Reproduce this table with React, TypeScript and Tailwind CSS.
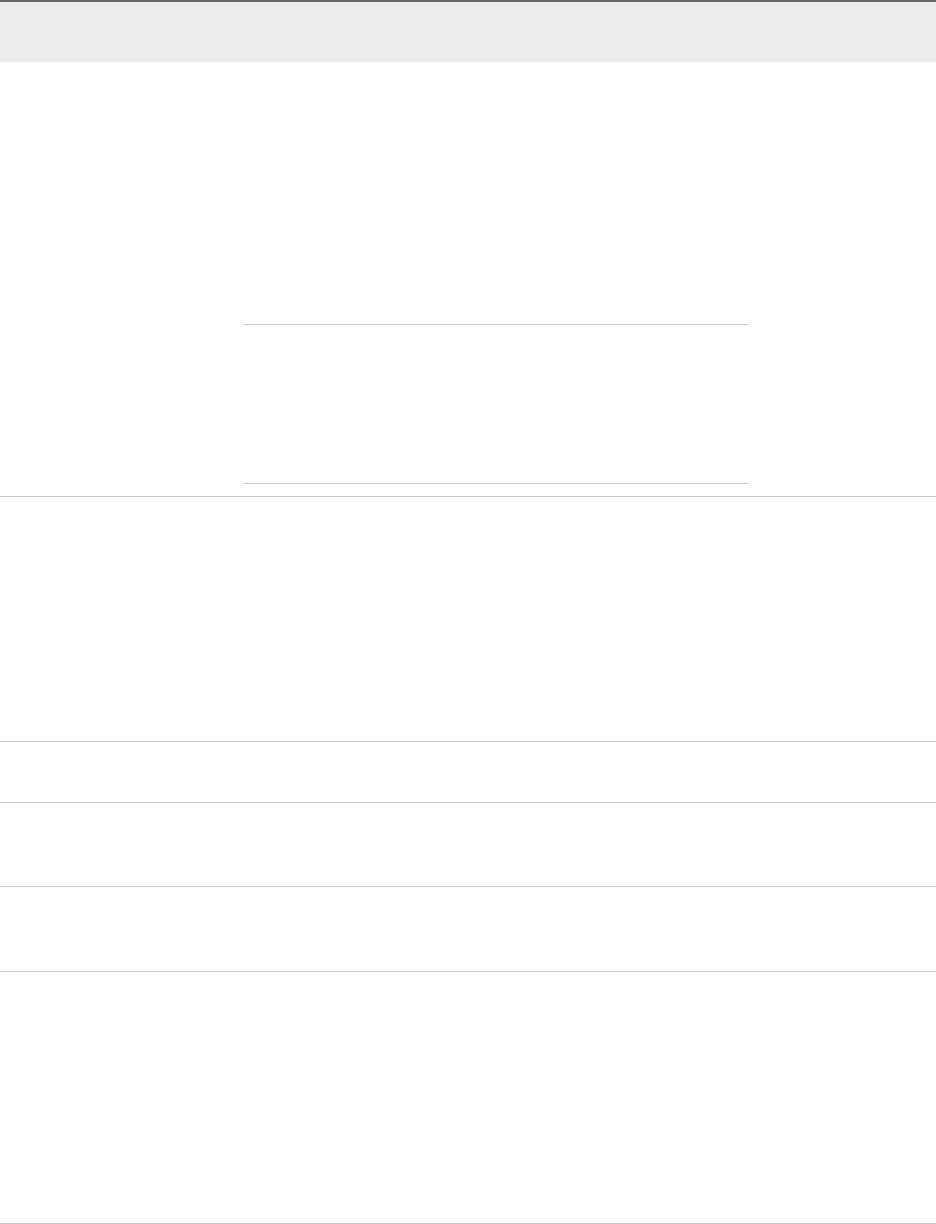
export default function App() {
  return (
    <div className="flex w-[936px] flex-col bg-white font-['Liberation_Sans',sans-serif]">
      {/* header row */}
      <div className="h-[62px] border-t-2 border-[#666666] bg-[#ececec]" />

      {/* row with nested table */}
      <div className="flex h-[435px] border-b border-[#c6c6c6]">
        <div className="w-[244px]" />
        <div className="flex w-[504px] flex-col pt-[262px]">
          <div className="h-[160px] border-y border-[#c6c6c6]" />
        </div>
      </div>

      <div className="h-[245px] border-b border-[#c6c6c6]" />
      <div className="h-[61px] border-b border-[#c6c6c6]" />
      <div className="h-[84px] border-b border-[#c6c6c6]" />
      <div className="h-[85px] border-b border-[#c6c6c6]" />
      <div className="h-[252px] border-b border-[#c6c6c6]" />
    </div>
  );
}
